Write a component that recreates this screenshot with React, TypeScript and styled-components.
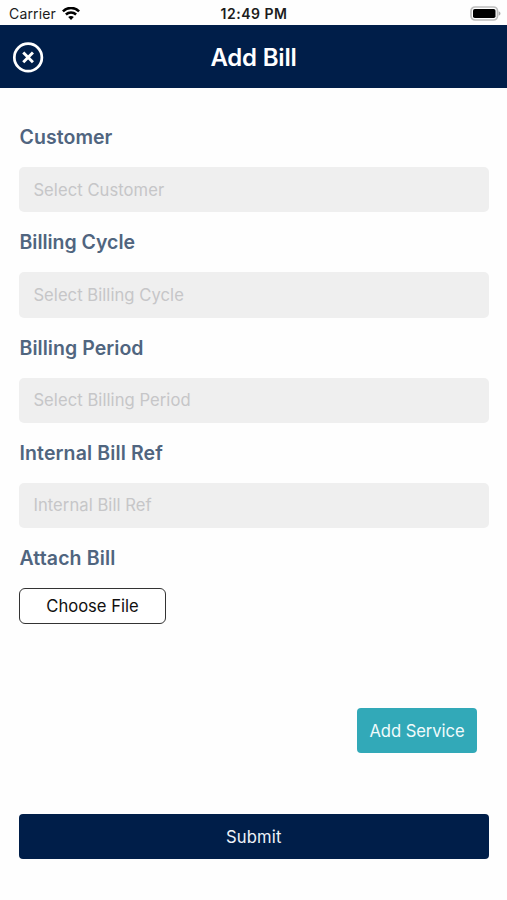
import React from "react";
import styled, { createGlobalStyle } from "styled-components";

const GlobalStyle = createGlobalStyle`
  * { box-sizing: border-box; }
  body { margin: 0; background: #fff; font-family: Inter, "Liberation Sans", sans-serif; }
  button, input { font-family: inherit; }
`;

const Screen = styled.div`
  width: 507px;
  height: 900px;
  display: flex;
  flex-direction: column;
  background: #fefefe;
  overflow: hidden;
`;

const StatusBar = styled.div`
  height: 25.4px;
  flex: none;
  display: grid;
  grid-template-columns: 1fr auto 1fr;
  align-items: center;
  padding: 2px 6px 0 9px;
  color: #1c1c1c;
  font-size: 14px;
  line-height: 20px;
`;

const Carrier = styled.div`
  display: flex;
  align-items: center;
  gap: 6px;
  letter-spacing: 0.15px;
`;

const Clock = styled.div`
  margin-right: 2px;
  font-weight: 600;
  font-size: 14px;
  letter-spacing: 0.5px;
`;

const Battery = styled.svg`
  justify-self: end;
`;

const Header = styled.header`
  height: 63px;
  flex: none;
  display: grid;
  grid-template-columns: 44px 1fr 44px;
  align-items: center;
  padding-top: 1px;
  background: #001e49;
`;

const CloseButton = styled.button`
  display: flex;
  padding: 0 0 0 12px;
  border: 0;
  background: none;
`;

const Title = styled.h1`
  margin: 0;
  padding-top: 2px;
  color: #fff;
  font-size: 24px;
  font-weight: 600;
  line-height: 30px;
  letter-spacing: -0.2px;
  text-align: center;
`;

const Form = styled.form`
  display: flex;
  flex-direction: column;
  padding: 34.9px 18.5px 0 19px;
`;

const Field = styled.div`
  height: 105.2px;
  display: flex;
  flex-direction: column;
`;

const Label = styled.label<{ $track?: number }>`
  height: 28px;
  margin-bottom: 16px;
  padding-left: 0.5px;
  color: #50657f;
  font-size: 19.5px;
  font-weight: 600;
  line-height: 28px;
  letter-spacing: ${(p) => p.$track ?? 0}px;
`;

const Input = styled.input<{ $track?: number }>`
  height: 45.2px;
  padding: 0 14px 0 14.4px;
  border: 0;
  border-radius: 5px;
  outline: 0;
  background: #efefef;
  font-size: 16.6px;
  letter-spacing: ${(p) => p.$track ?? 0}px;
  &::placeholder { color: #c6c6c8; opacity: 1; }
`;

const FileButton = styled.button`
  width: 147px;
  height: 36px;
  padding: 0;
  border: 1.5px solid #333;
  border-radius: 6px;
  background: #fff;
  color: #111;
  font-size: 16.6px;
  letter-spacing: 0;
`;

const ServiceButton = styled.button`
  align-self: flex-end;
  width: 120px;
  height: 45px;
  margin: 58.3px 12px 61px 0;
  padding: 1px 0 0 1px;
  border: 0;
  border-radius: 4px;
  background: #32a9b8;
  color: #f0fbfc;
  font-size: 16.6px;
  letter-spacing: -0.05px;
`;

const SubmitButton = styled.button`
  height: 45px;
  padding: 1px 0 0;
  border: 0;
  border-radius: 4px;
  background: #001e49;
  color: #eef2f8;
  font-size: 16.6px;
  letter-spacing: 0.15px;
`;

const fields = [
  { label: "Customer", hint: "Select Customer", labelTrack: 0.06, hintTrack: 0.06 },
  { label: "Billing Cycle", hint: "Select Billing Cycle", labelTrack: -0.03, hintTrack: 0.05 },
  { label: "Billing Period", hint: "Select Billing Period", labelTrack: 0.05, hintTrack: 0.06 },
  { label: "Internal Bill Ref", hint: "Internal Bill Ref", labelTrack: 0.12, hintTrack: 0.06 },
];

export default function App() {
  return (
    <Screen>
      <GlobalStyle />
      <StatusBar>
        <Carrier>
          Carrier
          <svg width="18" height="14" viewBox="0 0 18 14" fill="none" stroke="#000" strokeWidth="2.5">
            <path d="M.9 4.3C5.4-.2 12.6-.2 17.1 4.3" />
            <path d="M3.9 7.5c2.9-2.8 7.3-2.8 10.2 0" />
            <path d="M9 12.9 6.2 10.1c1.5-1.5 4.1-1.5 5.6 0z" fill="#000" stroke="none" />
          </svg>
        </Carrier>
        <Clock>12:49 PM</Clock>
        <Battery width="31" height="16" viewBox="0 0 31 16">
          <rect x="1" y="1" width="26.5" height="13" rx="4" fill="#fff" stroke="#bdbdbd" strokeWidth="1.7" />
          <rect x="3" y="3" width="22.5" height="9" rx="1.8" fill="#000" />
          <path d="M28.7 5.3c2.3.8 2.3 3.7 0 4.5z" fill="#aaa" />
        </Battery>
      </StatusBar>
      <Header>
        <CloseButton aria-label="Close">
          <svg width="33" height="33" viewBox="0 0 33 33" fill="none" stroke="#fff">
            <circle cx="16.6" cy="16.4" r="14.2" strokeWidth="2.8" />
            <path d="m11.6 11.4 10 10m0-10-10 10" strokeWidth="3" />
          </svg>
        </CloseButton>
        <Title>Add Bill</Title>
      </Header>
      <Form onSubmit={(e) => e.preventDefault()}>
        {fields.map((f) => (
          <Field key={f.label}>
            <Label $track={f.labelTrack}>{f.label}</Label>
            <Input $track={f.hintTrack} placeholder={f.hint} />
          </Field>
        ))}
        <Field>
          <Label $track={0.12}>Attach Bill</Label>
          <FileButton type="button">Choose File</FileButton>
        </Field>
        <ServiceButton type="button">Add Service</ServiceButton>
        <SubmitButton type="submit">Submit</SubmitButton>
      </Form>
    </Screen>
  );
}
